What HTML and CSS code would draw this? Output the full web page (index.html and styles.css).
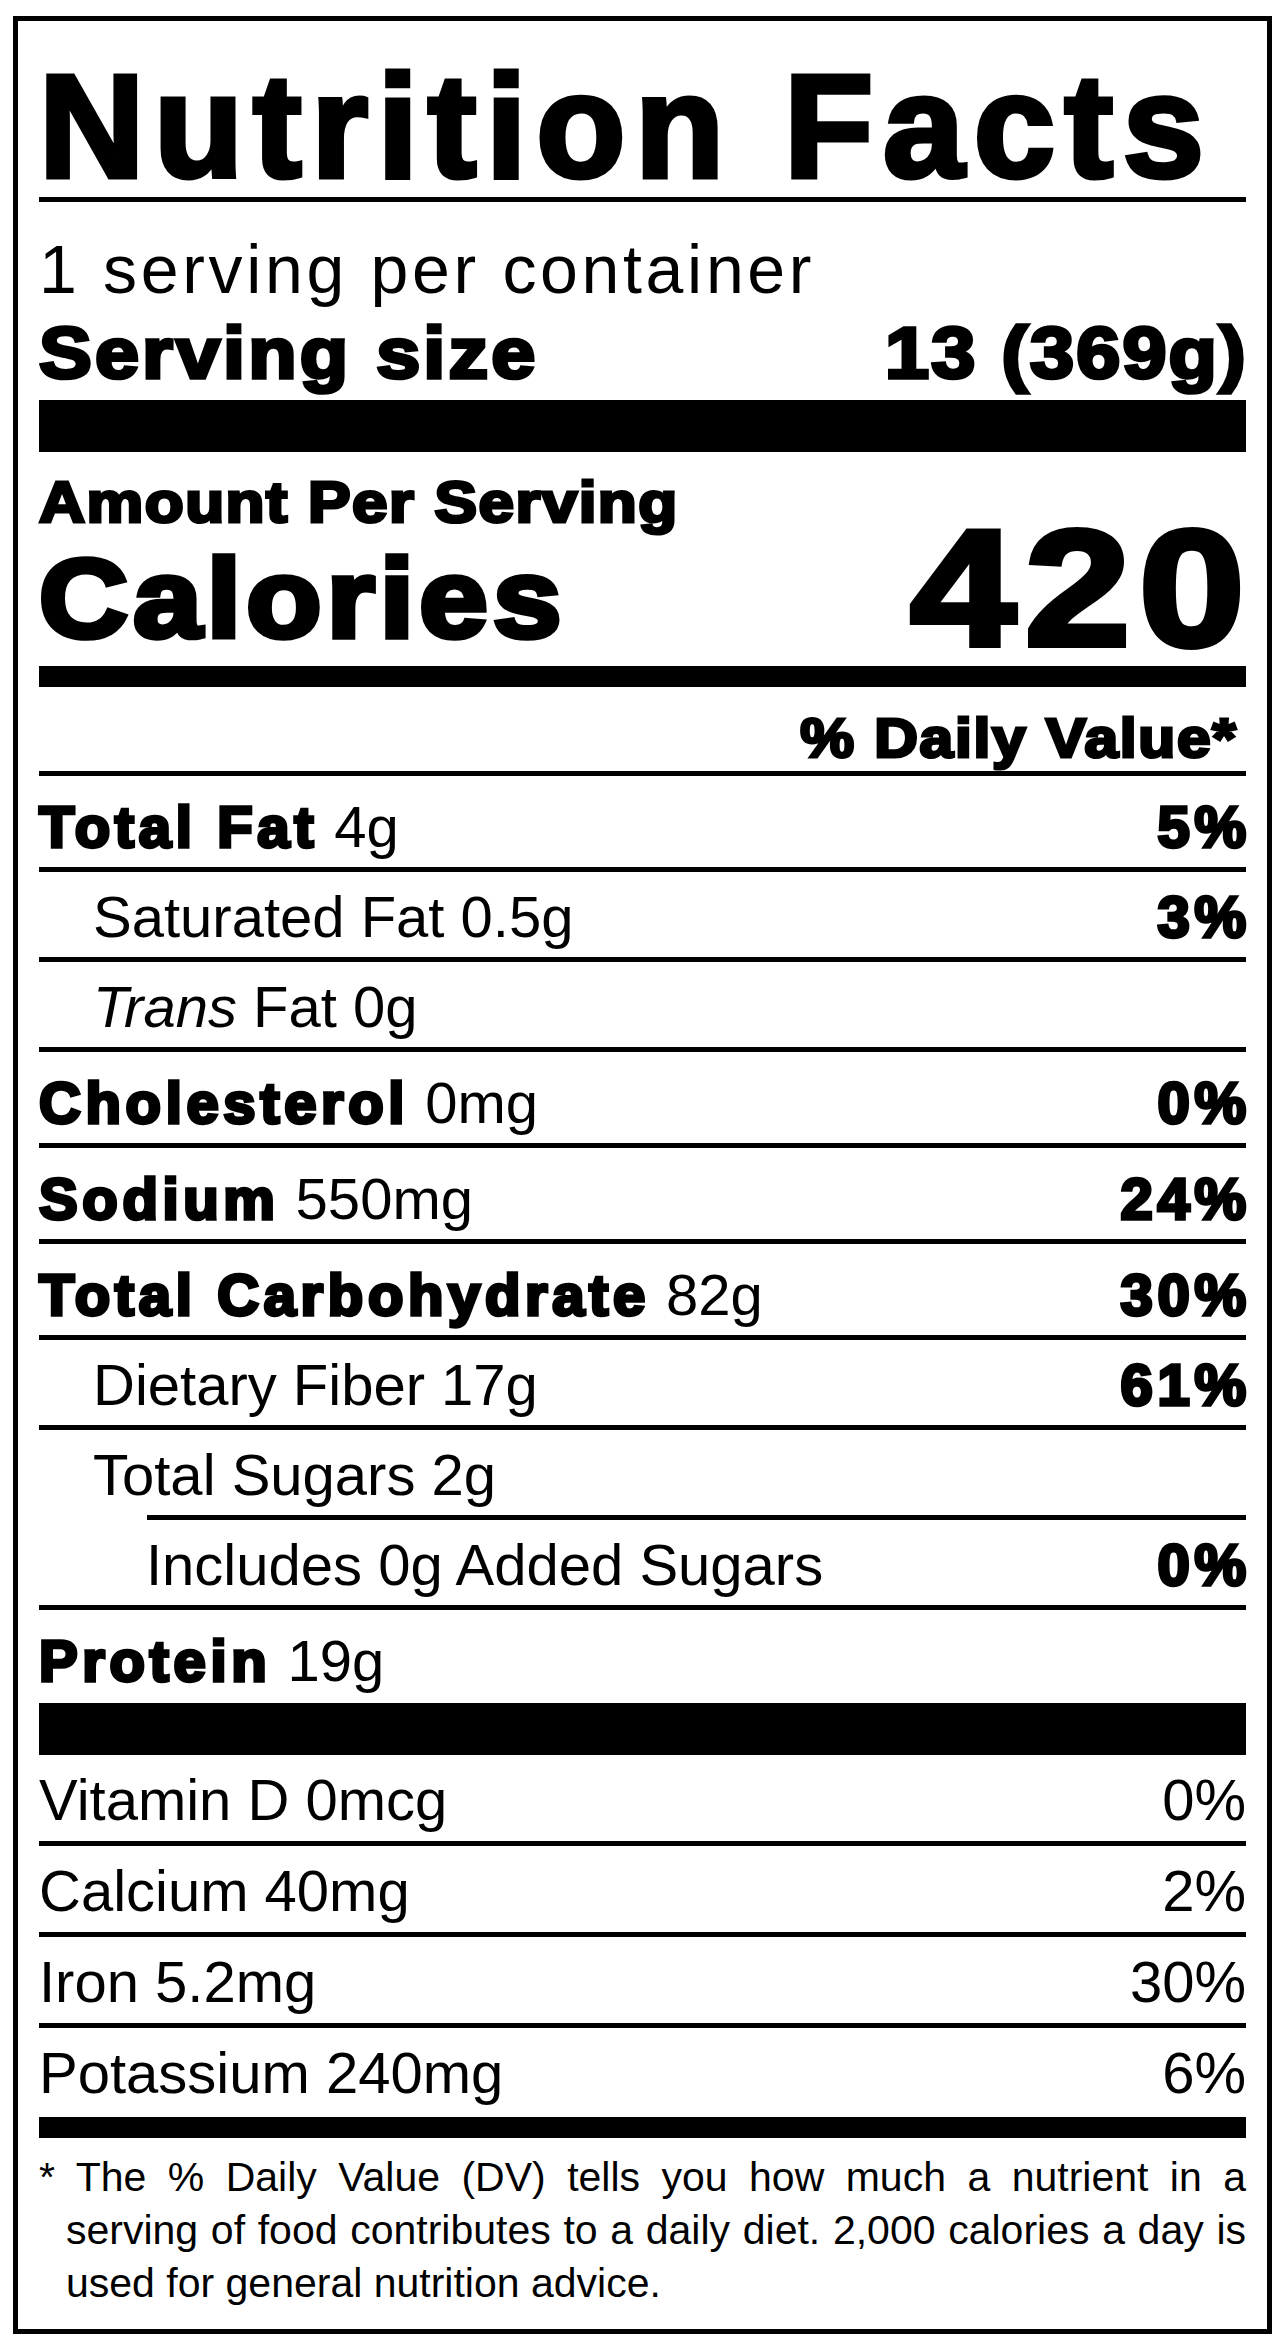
FILE: index.html
```html
<!DOCTYPE html>
<html lang="en">
<head>
<meta charset="utf-8">
<title>Nutrition Facts</title>
<link rel="stylesheet" href="styles.css">
</head>
<body>
<section class="label">
  <h1 class="title heavy">Nutrition Facts</h1>
  <p class="servings">1 serving per container</p>
  <div class="serving-size"><span class="heavy wide size-label">Serving size</span><span class="heavy wide wide-end size-value end">13 (369g)</span></div>
  <div class="bar bar-lg"></div>
  <p class="amount"><span class="heavy wide">Amount Per Serving</span></p>
  <div class="calories"><span class="heavy wide cal-label">Calories</span><span class="heavy wide wide-end cal-value end">420</span></div>
  <div class="bar bar-md"></div>
  <p class="dv"><span class="heavy wide wide-end end">% Daily Value*</span></p>

  <div class="row major"><span><b class="heavy">Total Fat</b> 4g</span><b class="heavy end">5%</b></div>
  <div class="row sub"><span>Saturated Fat 0.5g</span><b class="heavy end">3%</b></div>
  <div class="row sub"><span><i>Trans</i> Fat 0g</span></div>
  <div class="row major"><span><b class="heavy">Cholesterol</b> 0mg</span><b class="heavy end">0%</b></div>
  <div class="row major"><span><b class="heavy">Sodium</b> 550mg</span><b class="heavy end">24%</b></div>
  <div class="row major"><span><b class="heavy">Total Carbohydrate</b> 82g</span><b class="heavy end">30%</b></div>
  <div class="row sub"><span>Dietary Fiber 17g</span><b class="heavy end">61%</b></div>
  <div class="row sub no-rule"><span>Total Sugars 2g</span></div>
  <div class="rule-indent"></div>
  <div class="row subsub"><span>Includes 0g Added Sugars</span><b class="heavy end">0%</b></div>
  <div class="row major protein no-rule"><span><b class="heavy">Protein</b> 19g</span></div>
  <div class="bar bar-lg flush"></div>

  <div class="row vit"><span>Vitamin D 0mcg</span><span>0%</span></div>
  <div class="row vit"><span>Calcium 40mg</span><span>2%</span></div>
  <div class="row vit"><span>Iron 5.2mg</span><span>30%</span></div>
  <div class="row vit last no-rule"><span>Potassium 240mg</span><span>6%</span></div>
  <div class="bar bar-md"></div>

  <p class="footnote">* The % Daily Value (DV) tells you how much a nutrient in a serving of food contributes to a daily diet. 2,000 calories a day is used for general nutrition advice.</p>
</section>
</body>
</html>
```

FILE: styles.css
```css
* {
  box-sizing: border-box;
  margin: 0;
  padding: 0;
}

body {
  background: #fff;
  color: #000;
  font-family: "Liberation Sans", Arial, Helvetica, sans-serif;
}

.label {
  width: 1259px;
  height: 2318px;
  margin: 16px 0 0 13px;
  border: 5px solid #000;
  padding: 0 21px;
}

/* Heavy (Helvetica Black-like) text */
.heavy {
  --ls: 0.08em;
  --stroke: 0.06em;
  font-weight: 700;
  -webkit-text-stroke: var(--stroke) #000;
  letter-spacing: var(--ls);
}

/* widened standalone headings */
.wide {
  display: inline-block;
  transform: scaleX(var(--sx, 1.1));
  transform-origin: left center;
}

.wide-end {
  transform-origin: right center;
}

.end {
  margin-right: calc(-1 * var(--ls));
}

.title {
  --ls: 0.066em;
  --stroke: 0.034em;
  font-size: 146px;
  line-height: 140px;
  padding-top: 36px;
  white-space: nowrap;
  border-bottom: 5px solid #000;
}

.servings {
  font-size: 68px;
  line-height: 95px;
  padding-top: 20px;
  letter-spacing: 0.054em;
}

.serving-size {
  display: flex;
  justify-content: space-between;
  font-size: 72px;
  line-height: 72px;
}

.size-label {
  --ls: 0.039em;
  --stroke: 0.05em;
}

.size-value {
  --ls: 0.027em;
  --stroke: 0.05em;
}

.bar {
  background: #000;
}

.bar-lg {
  height: 52px;
  margin-top: 11px;
}

.bar-lg.flush {
  margin-top: 0;
}

.bar-md {
  height: 21px;
}

.amount {
  font-size: 58px;
  line-height: 64px;
  padding-top: 18px;
}

.amount .heavy {
  --ls: 0.023em;
  --stroke: 0.055em;
}

.calories {
  display: flex;
  justify-content: space-between;
  align-items: flex-end;
  height: 132px;
}

.cal-label {
  --ls: 0.042em;
  --stroke: 0.05em;
  font-size: 112px;
  line-height: 134px;
}

.cal-value {
  --ls: 0.047em;
  --stroke: 0.035em;
  --sx: 1.15;
  font-size: 165px;
  line-height: 156px;
}

.dv {
  font-size: 55px;
  line-height: 66px;
  padding-top: 18px;
  padding-right: 10px;
  text-align: right;
  border-bottom: 5px solid #000;
}

.dv .heavy {
  --ls: 0.028em;
  --stroke: 0.055em;
}

.row {
  display: flex;
  justify-content: space-between;
  font-size: 58px;
  line-height: 80px;
  height: 90px;
  padding-top: 5px;
  border-bottom: 5px solid #000;
  white-space: nowrap;
}

.row b {
  font-weight: 700;
}

.row.major {
  height: 96px;
  padding-top: 11px;
}

.row.sub {
  padding-left: 54px;
}

.row.subsub {
  padding-left: 107px;
}

.row.no-rule {
  border-bottom: none;
  height: 85px;
}

.row.protein {
  height: 93px;
}

.row.vit {
  height: 91px;
}

.row.vit.last {
  height: 89px;
}

.rule-indent {
  height: 5px;
  margin-left: 108px;
  background: #000;
}

.footnote {
  font-size: 41px;
  line-height: 53px;
  padding-top: 13px;
  padding-left: 27px;
  text-indent: -27px;
  text-align: justify;
}
```
